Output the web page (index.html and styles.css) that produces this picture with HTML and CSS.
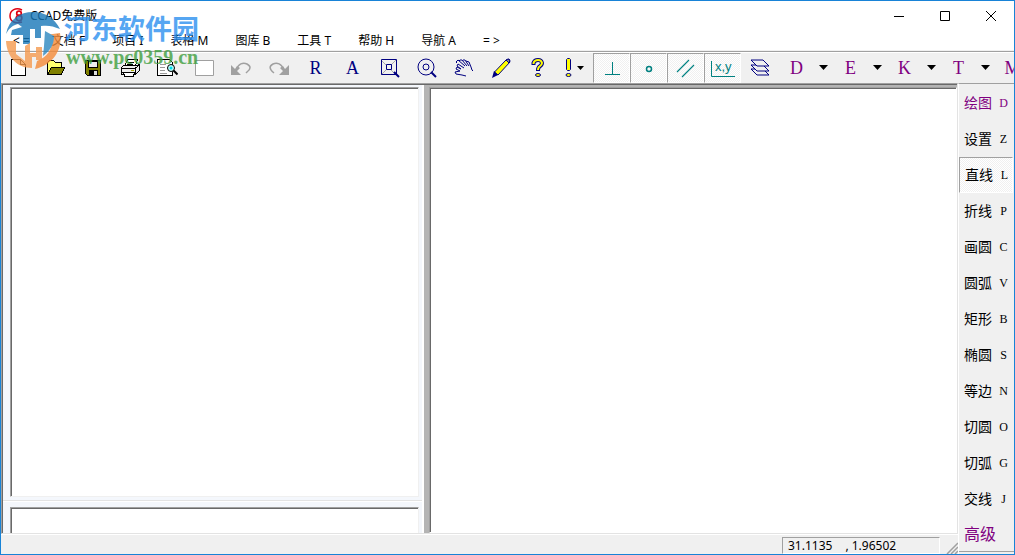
FILE: index.html
```html
<!DOCTYPE html>
<html lang="zh-CN">
<head>
<meta charset="utf-8">
<title>CCAD免费版</title>
<link rel="stylesheet" href="styles.css">
</head>
<body>
<div class="window">
  <header class="titlebar">
    <svg class="app-icon" width="16" height="16" viewBox="0 0 16 16" fill="none" stroke="#e00010"><path d="M13 2C7-1 1 2 1 8s6 8 12 6" stroke-width="1.5"/><circle cx="10" cy="5.500" r="2.300" stroke-width="1.700"/><circle cx="10" cy="10" r="2.800" stroke-width="1.700"/></svg>
    <h1 class="title">CCAD免费版</h1>
    <div class="caption-buttons">
      <button aria-label="最小化"><svg width="12" height="12"><path d="M1 6.500h10" stroke="#000"/></svg></button>
      <button aria-label="最大化"><svg width="12" height="12"><path d="M1.500 1.500h9v9h-9z" fill="none" stroke="#000"/></svg></button>
      <button aria-label="关闭"><svg width="12" height="12"><path d="M1 1l10 10M11 1L1 11" fill="none" stroke="#000"/></svg></button>
    </div>
  </header>
  <nav class="menubar">
    <button>&lt; =</button><button>文档 F</button><button>项目 I</button><button>表格 M</button><button>图库 B</button><button>工具 T</button><button>帮助 H</button><button>导航 A</button><button>= &gt;</button>
  </nav>
  <div class="toolbar" role="toolbar">
    <button class="tool" aria-label="新建"><svg width="20" height="20" shape-rendering="crispEdges"><path d="M2.500 1.500h9l5 5v11h-14z" fill="#fff" stroke="#000"/><path d="M11.500 1.500v5h5" fill="none" stroke="#000"/></svg></button>
    <button class="tool" aria-label="打开"><svg width="20" height="20" shape-rendering="crispEdges"><path d="M1.500 16V4.500l2-2h4l2 2h6V9" fill="#ffff70" stroke="#000"/><path d="M1.500 16.500l4-7h13l-3 7z" fill="#808000" stroke="#000"/></svg></button>
    <button class="tool" aria-label="保存"><svg width="20" height="20" shape-rendering="crispEdges"><path d="M2.500 2.500h15v15h-13l-2-2z" fill="#808000" stroke="#000"/><path d="M5.500 3h9v6h-9z" fill="#eee" stroke="#000"/><path d="M6 12h9v5H6z" fill="#000"/><path d="M11 13h3v4h-3z" fill="#ddd"/></svg></button>
    <button class="tool" aria-label="打印"><svg width="20" height="20" shape-rendering="crispEdges" stroke="#000"><path d="M4.500 9l3-7.500h10L15 9z" fill="#fff"/><path d="M8 4h6M7 6h6" fill="none"/><path d="M1.500 9.500l2-2h14l2-1v6l-4 4h-14z" fill="#eee"/><path d="M2 10.500h13l4-3M2 14.500h13M15.500 10v7" fill="none"/><path d="M3.500 14.500h11l-1 4h-9z" fill="#fff"/><path d="M11 12.500h3" stroke="#aa0"/></svg></button>
    <button class="tool" aria-label="打印预览"><svg width="22" height="20"><path d="M1.500 1.500h12l3 3v13h-15z" fill="#fff" stroke="#000" shape-rendering="crispEdges"/><path d="M4 6.500h6M4 9.500h5M4 12.500h5M4 15.500h7" stroke="#999" shape-rendering="crispEdges"/><circle cx="15" cy="10" r="3.500" fill="#bff" stroke="#000"/><circle cx="15" cy="10" r="1.500" fill="#00dce8"/><path d="M17.500 12.500l4 4" stroke="#000" stroke-width="2"/></svg></button>
    <button class="tool" aria-label="空白页"><svg width="20" height="20"><path d="M1.500 2.500h18v15h-18z" fill="#fff" stroke="#a0a0a0"/></svg></button>
    <button class="tool" aria-label="撤销" disabled><svg width="22" height="20"><path d="M1 7v10h10l-4-4 3-3-3-2-2 3z" fill="#a0a0a0"/><path d="M7 11c1-5 6-7 10-5 4 2 4 5 0 8l-1 1" fill="none" stroke="#a0a0a0" stroke-width="1.500"/></svg></button>
    <button class="tool" aria-label="重做" disabled><svg width="22" height="20"><path d="M21 7v10H11l4-4-3-3 3-2 2 3z" fill="#a0a0a0"/><path d="M15 11C14 6 9 4 5 6 1 8 1 11 6 15" fill="none" stroke="#a0a0a0" stroke-width="1.500"/></svg></button>
    <button class="tool letter navy">R</button>
    <button class="tool letter navy">A</button>
    <button class="tool" aria-label="窗口缩放"><svg width="22" height="20" fill="none" stroke="#000080"><path d="M2 2l5 5M17 2l-5 5M2 17l5-5M17 17l-5-5" stroke="#aaa"/><path d="M2.500 1.500h15v15h-15zM7.500 6.500h5v5h-5z"/><path d="M15 14l5 5" stroke-width="2"/></svg></button>
    <button class="tool" aria-label="缩放"><svg width="22" height="20" fill="none" stroke="#000080"><circle cx="10" cy="9" r="8"/><circle cx="10" cy="9" r="3"/><path d="M15 14l5 5" stroke-width="2"/></svg></button>
    <button class="tool" aria-label="平移"><svg width="22" height="20" fill="none" stroke="#000080"><path d="M13 18l-4-1-6-1-1-2 5-1-4-2 1-2 4 2-4-3 1-2 6 4M4 5l-1-1 2-2 7 6M6 3l1-1 2 0 5 6M10 2l2 0 4 6M13 3l3 1 2 5 1 3 1 1"/></svg></button>
    <button class="tool" aria-label="画笔"><svg width="20" height="22"><path d="M3.500 15L15 3l3-1 1 3L7 18z" fill="#ff0" stroke="#000080"/><path d="M1 21l2-7 4 4z" fill="#000080"/><path d="M15 3l3 3 1-3-2-1z" fill="#888" stroke="#000080"/></svg></button>
    <button class="tool" aria-label="帮助"><svg width="16" height="20"><g fill="none" stroke-linejoin="round"><path d="M3.500 7V5q1-3 4.500-3t4 3q0 2-3 4-1 1-1 4" stroke="#000080" stroke-width="4"/><path d="M3.500 6V5q1-3 4.500-3t4 3q0 2-3 4-1 1-1 3" stroke="#ff0" stroke-width="2"/></g><ellipse cx="8" cy="17" rx="2.500" ry="1.500" fill="#ff0" stroke="#000080"/></svg></button>
    <button class="tool split" aria-label="提示"><svg width="8" height="20"><path d="M1.500 1.500l1-1h2l1 1v10l-1 1h-2l-1-1z" fill="#ff0" stroke="#000080"/><ellipse cx="3.500" cy="17" rx="2.500" ry="1.500" fill="#ff0" stroke="#000080"/></svg><svg width="8" height="5"><path d="M0 1h7L3.500 5z"/></svg></button>
    <button class="tool toggle" aria-label="垂足" aria-pressed="true"><svg width="20" height="20" fill="none" stroke="#008080"><path d="M3 16.500h15M10.500 4v12"/></svg></button>
    <button class="tool toggle" aria-label="点" aria-pressed="true"><svg width="20" height="20"><circle cx="10" cy="11" r="2.500" fill="none" stroke="#008080" stroke-width="1.500"/></svg></button>
    <button class="tool toggle" aria-label="平行" aria-pressed="true"><svg width="20" height="20" fill="none" stroke="#008080"><path d="M1 14L13 2M6 19L18 7" stroke-width="1.200"/></svg></button>
    <button class="tool toggle" aria-label="坐标" aria-pressed="true"><svg width="26" height="20"><path d="M1.500 3v15.500H25" fill="none" stroke="#008080"/><text class="coord" x="5" y="13">x,y</text></svg></button>
    <button class="tool" aria-label="图层"><svg width="22" height="20" fill="#f0f0f0" stroke="#000080"><path d="M2 11h12l6 6H8z"/><path d="M2 7h12l6 6H8z"/><path d="M2 2h12l6 6H8z"/></svg></button>
    <button class="tool letter purple">D</button><button class="arrow" aria-label="D 菜单"><svg width="9" height="5"><path d="M0 0h9L4.500 5z"/></svg></button>
    <button class="tool letter purple">E</button><button class="arrow" aria-label="E 菜单"><svg width="9" height="5"><path d="M0 0h9L4.500 5z"/></svg></button>
    <button class="tool letter purple">K</button><button class="arrow" aria-label="K 菜单"><svg width="9" height="5"><path d="M0 0h9L4.500 5z"/></svg></button>
    <button class="tool letter purple">T</button><button class="arrow" aria-label="T 菜单"><svg width="9" height="5"><path d="M0 0h9L4.500 5z"/></svg></button>
    <button class="tool letter purple">M</button>
  </div>
  <div class="body">
    <div class="main">
      <main class="workspace">
        <section class="browser">
          <div class="pane pane-list"></div>
          <div class="divider"></div>
          <div class="pane pane-log"></div>
        </section>
        <section class="canvas"></section>
      </main>
      <footer class="statusbar">
        <output class="coords"><span>31.1135</span><span>, 1.96502</span></output>
        <svg class="grip" width="12" height="12" stroke="#a0a0a0" stroke-width="1.500"><path d="M1 12L12 1M5 12l7-7M9 12l3-3"/></svg>
      </footer>
    </div>
    <aside class="sidebar">
      <button class="command purple">绘图 <kbd>D</kbd></button>
      <button class="command">设置 <kbd>Z</kbd></button>
      <button class="command selected">直线 <kbd>L</kbd></button>
      <button class="command">折线 <kbd>P</kbd></button>
      <button class="command">画圆 <kbd>C</kbd></button>
      <button class="command">圆弧 <kbd>V</kbd></button>
      <button class="command">矩形 <kbd>B</kbd></button>
      <button class="command">椭圆 <kbd>S</kbd></button>
      <button class="command">等边 <kbd>N</kbd></button>
      <button class="command">切圆 <kbd>O</kbd></button>
      <button class="command">切弧 <kbd>G</kbd></button>
      <button class="command">交线 <kbd>J</kbd></button>
      <button class="command advanced purple">高级</button>
    </aside>
  </div>
  <div class="watermark">
    <svg width="58" height="58" viewBox="0 0 58 58"><path d="M1 23C4 8 15 1 28 1c13 0 22 7 27 17-7-3-12-4-19-3v12h-6V18h-5v15h-7V24H6l1-5 10-3-4-3C8 14 4 17 1 23z" fill="#1878b8"/><path d="M1 30h10v13l9 7V35l5-3v10h6v-6h6v13h-6v-3h-4v11C12 57 2 46 1 30z" fill="#f59a50"/><path d="M55 22c3 18-8 32-25 36l2-8c10-4 15-11 15-21l-7-5z" fill="#f48a38"/><path d="M40 20l9 5c0 9-4 15-11 20l1-10z" fill="#2d88c0"/></svg>
    <div class="watermark-text"><strong>河东软件园</strong><span>www.pc0359.cn</span></div>
  </div>
</div>
</body>
</html>
```
FILE: styles.css
```css
* { box-sizing: border-box; }
body { margin: 0; font: 12px/16px "Noto Sans", "Noto Sans CJK SC", sans-serif; color: #000; }
button { margin: 0; padding: 0; border: 0; background: none; font: inherit; color: inherit; }
svg { display: block; flex: none; }
.window { position: relative; display: flex; flex-direction: column; height: 100vh; border: 1px solid #1883d7; background: #f0f0f0; overflow: hidden; }
.titlebar { display: flex; align-items: center; height: 29px; padding-left: 8px; background: #fff; }
.title { flex: 1; margin: 0 0 0 5px; font-size: 12px; font-weight: 400; }
.caption-buttons { display: flex; }
.caption-buttons button { display: grid; place-items: center; width: 46px; height: 29px; }
.menubar { display: flex; gap: 27px; height: 20px; padding: 2px 0 0 12px; background: #fff; white-space: nowrap; }
.menubar button:first-child { margin-right: -5px; }
.toolbar { display: flex; flex: none; height: 32px; border-top: 1px solid #a0a0a0; box-shadow: inset 0 1px #fff; margin-top: 1px; overflow: hidden; }
.tool { display: flex; flex: none; align-items: center; justify-content: center; width: 37px; }
.tool:first-child { width: 36px; }
.tool:nth-child(7) { width: 38px; }
.split { gap: 4px; }
.arrow { display: flex; flex: none; align-items: center; justify-content: center; width: 17px; }
.letter { font: 18px/20px "Liberation Serif", serif; }
.navy { color: #000080; }
.purple { color: #800080; }
.toggle, .selected { border: 1px solid; border-color: #a0a0a0 #fff #fff #a0a0a0; background: repeating-conic-gradient(#fff 0 25%, #f0f0f0 0 50%) 0 0 / 2px 2px; }
.toggle { margin-top: 1px; }
.coord { font: 13px "Liberation Sans", sans-serif; fill: #008080; }
.body { display: flex; flex: 1; min-height: 0; }
.main { display: flex; flex: 1; flex-direction: column; min-width: 0; }
.workspace { display: flex; flex: 1; min-height: 0; gap: 5px; border: 1px solid; border-color: #a0a0a0 #e3e3e3 #e3e3e3 #a0a0a0; background: #b4b4b4; box-shadow: inset 1px 1px #696969; padding: 1px 0 0 1px; }
.browser { display: flex; flex: 0 0 421px; flex-direction: column; padding: 2px 3px 0 7px; background: #f4f7fc; border-right: 2px solid #fff; }
.pane { border: 1px solid; border-color: #a0a0a0 #f0f0f0 #f0f0f0 #a0a0a0; background: #fff; box-shadow: inset 1px 1px #696969; }
.pane-list { flex: 1; }
.divider { height: 10px; margin: 0 -3px 0 -7px; background: linear-gradient(#f4f7fc 3px, #e3e3e3 3px, #e3e3e3 4px, #fff 4px, #fff 5px, #f4f7fc 5px); }
.pane-log { height: 26px; border-bottom: 0; }
.canvas { flex: 1; margin-top: 2px; border: 1px solid; border-color: #a0a0a0 #fff #fff #a0a0a0; background: #fff; box-shadow: inset 1px 1px #696969; }
.statusbar { display: flex; justify-content: flex-end; align-items: flex-end; height: 20px; gap: 6px; border-top: 1px solid #fff; }
.coords { display: flex; gap: 13px; width: 158px; height: 17px; padding-left: 5px; border: 1px solid; border-color: #a0a0a0 #fff #fff #a0a0a0; line-height: 16px; }
.sidebar { display: flex; flex: none; flex-direction: column; width: 56px; padding-top: 1px; border-top: 1px solid #a0a0a0; border-left: 1px solid #fff; }
.command { display: flex; flex: none; align-items: center; height: 36px; gap: 7px; padding-left: 5px; font-size: 14px; line-height: 20px; white-space: nowrap; }
.command kbd { font: 12px/20px "Liberation Serif", serif; min-width: 9px; text-align: center; }
.selected { margin-right: 1px; }
.advanced { height: 35px; font-size: 16px; border-bottom: 1px solid #a0a0a0; }
.watermark { position: absolute; top: 10px; left: 4px; display: flex; gap: 1px; opacity: 0.8; pointer-events: none; }
.watermark-text { display: flex; flex-direction: column; white-space: nowrap; }
.watermark strong { font: 700 27px/34px "Noto Sans CJK SC", sans-serif; color: #2d91f0; }
.watermark span { padding-left: 2px; font: 700 20px/24px "Liberation Serif", serif; color: #40a040; }
```
